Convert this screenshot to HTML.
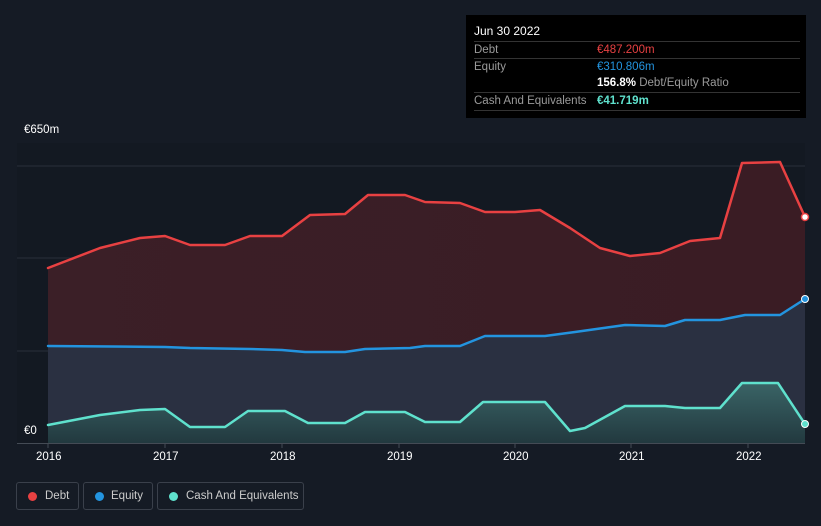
<!DOCTYPE html>
<html><head><style>
body{margin:0;background:#151b25;font-family:"Liberation Sans",sans-serif;}
.w{position:relative;width:821px;height:526px;overflow:hidden;background:#151b25}
.tt{position:absolute;left:466px;top:15px;width:340px;height:103px;background:#000;color:#fff;font-size:11.5px}
.tt .r{position:absolute;left:8px;right:6px;border-top:1px solid #333;height:17px;line-height:17px}
.lab{color:#9a9a9a}
.v{position:absolute;left:123px;top:0}
.ax{position:absolute;color:#fff;font-size:11.5px}
.lg{position:absolute;top:482px;height:28px;border:1px solid #3a404b;border-radius:3px;color:#ccc;font-size:11.5px;line-height:27px;box-sizing:border-box;white-space:nowrap}
.lg i{position:absolute;left:11px;top:9px;width:9px;height:9px;border-radius:50%}
</style></head><body><div class="w">
<svg width="821" height="526" style="position:absolute;left:0;top:0">
<defs><linearGradient id="cg" x1="0" y1="0" x2="0" y2="1"><stop offset="0" stop-color="#3a6466"/><stop offset="1" stop-color="#22393f"/></linearGradient>
<linearGradient id="dg" x1="0" y1="0" x2="1" y2="0"><stop offset="0" stop-color="#3b1f27"/><stop offset="1" stop-color="#3a1c24"/></linearGradient></defs>
<rect x="17" y="143" width="788" height="300" fill="#131922"/>
<g stroke="#2a303a" stroke-width="1"><line x1="17" y1="166" x2="805" y2="166"/><line x1="17" y1="258" x2="805" y2="258"/><line x1="17" y1="351" x2="805" y2="351"/></g>
<path fill="url(#dg)" d="M48,268 L100,248 140,238 165,236 190,245 225,245 250,236 282,236 310,215 345,214 368,195 405,195 425,202 460,203 485,212 515,212 540,210 570,228 600,248 630,256 660,253 690,241 720,238 742,163 780,162 805,217 L805,443 48,443Z"/>
<path fill="#2a3041" d="M48,346 L165,347 190,348 250,349 282,350 305,352 345,352 365,349 410,348 425,346 460,346 485,336 545,336 575,332 625,325 665,326 685,320 720,320 745,315 780,315 805,299 L805,443 48,443Z"/>
<path fill="url(#cg)" d="M48,425 L100,415 140,410 165,409 190,427 225,427 248,411 285,411 308,423 345,423 365,412 405,412 425,422 460,422 483,402 545,402 570,431 585,428 625,406 665,406 685,408 720,408 742,383 778,383 805,424 L805,443 48,443Z"/>
<g fill="none" stroke-width="2.5" stroke-linejoin="round" stroke-linecap="round">
<path stroke="#e84142" d="M48,268 L100,248 140,238 165,236 190,245 225,245 250,236 282,236 310,215 345,214 368,195 405,195 425,202 460,203 485,212 515,212 540,210 570,228 600,248 630,256 660,253 690,241 720,238 742,163 780,162 805,217"/>
<path stroke="#2394df" d="M48,346 L165,347 190,348 250,349 282,350 305,352 345,352 365,349 410,348 425,346 460,346 485,336 545,336 575,332 625,325 665,326 685,320 720,320 745,315 780,315 805,299"/>
<path stroke="#5fe1cd" d="M48,425 L100,415 140,410 165,409 190,427 225,427 248,411 285,411 308,423 345,423 365,412 405,412 425,422 460,422 483,402 545,402 570,431 585,428 625,406 665,406 685,408 720,408 742,383 778,383 805,424"/>
</g>
<line x1="17" y1="443.5" x2="805" y2="443.5" stroke="#444b55"/>
<g stroke="#444b55"><line x1="48" y1="443" x2="48" y2="448"/><line x1="165" y1="443" x2="165" y2="448"/><line x1="282" y1="443" x2="282" y2="448"/><line x1="399" y1="443" x2="399" y2="448"/><line x1="515" y1="443" x2="515" y2="448"/><line x1="631" y1="443" x2="631" y2="448"/><line x1="748" y1="443" x2="748" y2="448"/></g>
<circle cx="805" cy="217" r="3.5" fill="#fff" stroke="#e84142" stroke-width="1.5"/>
<circle cx="805" cy="299" r="3.5" fill="#2394df" stroke="#fff" stroke-width="1"/>
<circle cx="805" cy="424" r="3.5" fill="#5fe1cd" stroke="#fff" stroke-width="1"/>
</svg>
<div class="ax" style="left:24px;top:124px">€650m</div>
<div class="ax" style="left:24px;top:425px">€0</div>
<div class="ax" style="left:36px;top:451px">2016</div>
<div class="ax" style="left:153px;top:451px">2017</div>
<div class="ax" style="left:270px;top:451px">2018</div>
<div class="ax" style="left:387px;top:451px">2019</div>
<div class="ax" style="left:503px;top:451px">2020</div>
<div class="ax" style="left:619px;top:451px">2021</div>
<div class="ax" style="left:736px;top:451px">2022</div>
<div class="tt">
<div style="position:absolute;left:8px;top:9px;font-size:12px">Jun 30 2022</div>
<div class="r" style="top:26px"><span class="lab">Debt</span><span class="v" style="color:#e84142">€487.200m</span></div>
<div class="r" style="top:43px"><span class="lab">Equity</span><span class="v" style="color:#2394df">€310.806m</span></div>
<div class="r" style="top:60px;border-top:none"><span class="v"><b style="color:#fff">156.8%</b> <span class="lab">Debt/Equity Ratio</span></span></div>
<div class="r" style="top:77px;border-bottom:1px solid #333"><span class="lab">Cash And Equivalents</span><span class="v" style="color:#5fe1cd;font-weight:bold">€41.719m</span></div>
</div>
<div class="lg" style="left:16px;width:63px"><i style="background:#e84142"></i><span style="position:absolute;left:28px">Debt</span></div>
<div class="lg" style="left:83px;width:70px"><i style="background:#2394df"></i><span style="position:absolute;left:27px">Equity</span></div>
<div class="lg" style="left:157px;width:147px"><i style="background:#5fe1cd"></i><span style="position:absolute;left:28px">Cash And Equivalents</span></div>
</div></body></html>
